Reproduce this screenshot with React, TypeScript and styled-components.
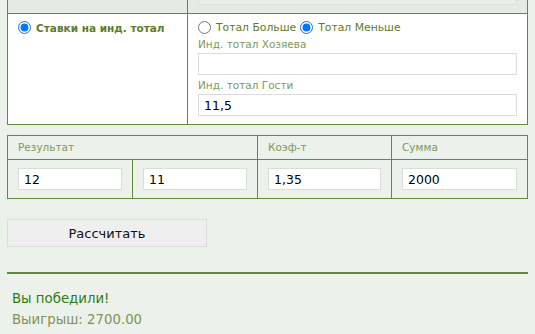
import React from 'react';
import styled, { createGlobalStyle } from 'styled-components';

const green = '#5f8b3d';

const GlobalStyle = createGlobalStyle`
  html, body {
    margin: 0;
    padding: 0;
    background: #edf1ec;
    font-family: "DejaVu Sans", Verdana, sans-serif;
  }
`;

const Page = styled.div`
  padding: 0 7px;
`;

const Panel = styled.div`
  border: 1px solid ${green};
  border-top: none;
`;

const PanelRow = styled.div<{ muted?: boolean }>`
  display: grid;
  grid-template-columns: 179px 1fr;
  background: ${({ muted }) => (muted ? '#e6eae5' : '#fff')};
  border-bottom: ${({ muted }) => (muted ? `1px solid ${green}` : 'none')};
  height: ${({ muted }) => (muted ? '13px' : 'auto')};
`;

const Cell = styled.div<{ divided?: boolean }>`
  border-left: ${({ divided }) => (divided ? `1px solid ${green}` : 'none')};
  padding: 7px 10px 8px;
  display: flex;
  flex-direction: column;
`;

const TopCell = styled.div`
  border-left: 1px solid ${green};
  padding: 0 10px;
`;

const StubBox = styled.div`
  height: 4px;
  border: 1px solid #dcdedb;
  border-top: none;
  background: #eaedea;
`;

const Radio = styled.input.attrs({ type: 'radio' })`
  width: 13px;
  height: 13px;
  margin: 0 5px 0 0;
  flex: none;
`;

const ChoiceLine = styled.div`
  display: flex;
  align-items: center;
  height: 13px;
`;

const Choice = styled.label<{ strong?: boolean }>`
  display: inline-flex;
  align-items: center;
  margin-right: 4px;
  font-weight: ${({ strong }) => (strong ? 'bold' : 'normal')};
  color: ${({ strong }) => (strong ? '#5e7b2a' : '#5d7b2c')};
  font-size: ${({ strong }) => (strong ? '10.5px' : '10.8px')};
`;

const FieldLabel = styled.div`
  font-size: 10.5px;
  line-height: 13px;
  color: #7c9a58;
  margin-top: 4px;
`;

const TextInput = styled.input`
  box-sizing: border-box;
  width: 100%;
  height: 22px;
  margin: 2px 0 0;
  padding: 0 5px;
  border: 1px solid #dcdcdc;
  background: #fff;
  font-family: "DejaVu Sans", Verdana, sans-serif;
  font-size: 12.5px;
  color: #000;
  outline: none;
`;

const Grid = styled.div`
  margin-top: 10px;
  border: 1px solid ${green};
  display: grid;
  grid-template-columns: 124px 125px 134px 1fr;
`;

const HeadCell = styled.div<{ span?: number; first?: boolean }>`
  grid-column: span ${({ span }) => span ?? 1};
  border-left: ${({ first }) => (first ? 'none' : `1px solid ${green}`)};
  border-bottom: 1px solid ${green};
  padding: 5px 10px;
  height: 13px;
  line-height: 13px;
  font-size: 10.5px;
  color: #7c9a58;
`;

const BodyCell = styled.div<{ first?: boolean }>`
  border-left: ${({ first }) => (first ? 'none' : `1px solid ${green}`)};
  padding: 8px 10px;

  ${TextInput} {
    margin: 0;
  }
`;

const Button = styled.button`
  display: block;
  margin-top: 20px;
  width: 200px;
  height: 28px;
  background: #efefef;
  border: 1px solid #dcdcdc;
  font-family: "DejaVu Sans", Verdana, sans-serif;
  font-size: 13px;
  color: #111;
  cursor: pointer;
`;

const Divider = styled.div`
  margin-top: 25px;
  height: 2px;
  background: ${green};
`;

const Result = styled.div`
  padding: 14px 5px 0;
  font-size: 13.3px;
  line-height: 21px;
`;

const ResultLine = styled.div<{ win?: boolean }>`
  color: ${({ win }) => (win ? '#2b7d12' : '#7f9356')};
`;

export default function App() {
  return (
    <>
      <GlobalStyle />
      <Page>
        <Panel>
          <PanelRow muted>
            <div />
            <TopCell>
              <StubBox />
            </TopCell>
          </PanelRow>
          <PanelRow>
            <Cell>
              <ChoiceLine>
                <Choice strong>
                  <Radio name="mode" defaultChecked />
                  Ставки на инд. тотал
                </Choice>
              </ChoiceLine>
            </Cell>
            <Cell divided>
              <ChoiceLine>
                <Choice>
                  <Radio name="side" />
                  Тотал Больше
                </Choice>
                <Choice>
                  <Radio name="side" defaultChecked />
                  Тотал Меньше
                </Choice>
              </ChoiceLine>
              <FieldLabel>Инд. тотал Хозяева</FieldLabel>
              <TextInput defaultValue="" />
              <FieldLabel>Инд. тотал Гости</FieldLabel>
              <TextInput defaultValue="11,5" />
            </Cell>
          </PanelRow>
        </Panel>

        <Grid>
          <HeadCell span={2} first>Результат</HeadCell>
          <HeadCell>Коэф-т</HeadCell>
          <HeadCell>Сумма</HeadCell>
          <BodyCell first>
            <TextInput defaultValue="12" />
          </BodyCell>
          <BodyCell>
            <TextInput defaultValue="11" />
          </BodyCell>
          <BodyCell>
            <TextInput defaultValue="1,35" />
          </BodyCell>
          <BodyCell>
            <TextInput defaultValue="2000" />
          </BodyCell>
        </Grid>

        <Button>Рассчитать</Button>
        <Divider />
        <Result>
          <ResultLine win>Вы победили!</ResultLine>
          <ResultLine>Выигрыш: 2700.00</ResultLine>
        </Result>
      </Page>
    </>
  );
}
